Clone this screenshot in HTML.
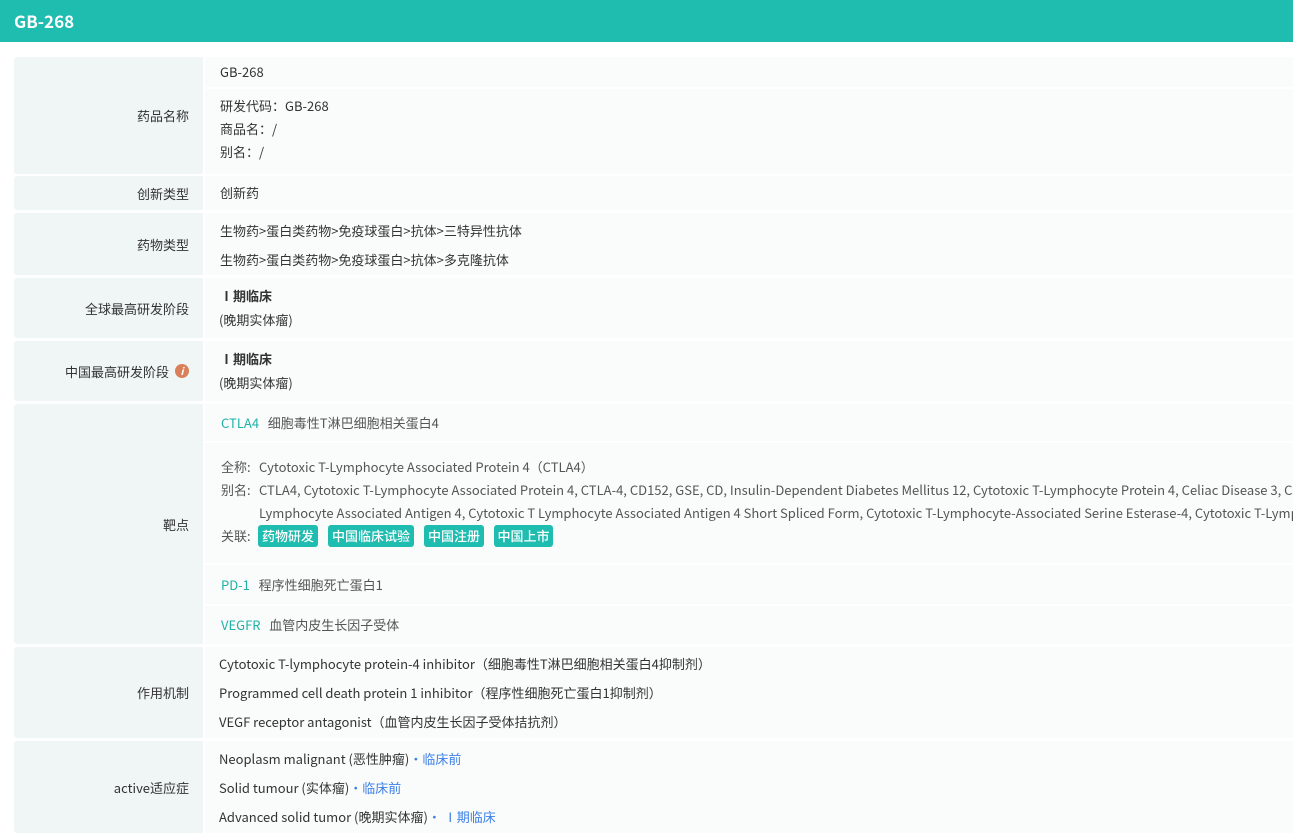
<!DOCTYPE html>
<html><head><meta charset="utf-8"><style>
*{margin:0;padding:0;box-sizing:border-box}
html,body{width:1293px;height:836px;overflow:hidden}
body{background:#fff;font-family:"Noto Sans CJK SC","Liberation Sans",sans-serif;font-size:13px;color:#333;position:relative}
.wrap{position:absolute;left:0;top:0;width:1293px;height:836px;overflow:hidden}
.hd{position:absolute;left:0;top:0;width:1293px;height:42px;background:#1fbcb0;color:#fff;font-weight:bold;font-size:17px;line-height:42px;padding-left:14px}
.l{position:absolute;left:14px;width:189px;background:#eff6f5;padding-right:14px;display:flex;align-items:center;justify-content:flex-end;border-radius:3px 0 0 3px}
.v{position:absolute;left:205px;right:0;background:#fafcfc}
.t{position:absolute;left:220px;white-space:nowrap;line-height:18px}
.teal{color:#1fb1a6}
.blue{color:#3c7fe6}
.tag{position:absolute;top:0;background:#1fbcb0;color:#fff;border-radius:3px;line-height:22px;font-size:13px;text-align:center;font-weight:500}
.g{color:#555}
b{font-weight:bold}
.s{position:absolute;left:38px;top:0}
</style></head><body><div class="wrap">
<div class="hd">GB-268</div>

<div class="l" style="top:57px;height:117px">药品名称</div>
<div class="v" style="top:57px;height:30px"></div>
<div class="v" style="top:89px;height:85px"></div>
<div class="t" style="top:63px">GB-268</div>
<div class="t" style="top:97px">研发代码：GB-268</div>
<div class="t" style="top:120px">商品名：/</div>
<div class="t" style="top:143px">别名：/</div>

<div class="l" style="top:176px;height:34px">创新类型</div>
<div class="v" style="top:176px;height:34px"></div>
<div class="t" style="top:184px">创新药</div>

<div class="l" style="top:213px;height:62px">药物类型</div>
<div class="v" style="top:213px;height:62px"></div>
<div class="t" style="top:222px">生物药&gt;蛋白类药物&gt;免疫球蛋白&gt;抗体&gt;三特异性抗体</div>
<div class="t" style="top:251px">生物药&gt;蛋白类药物&gt;免疫球蛋白&gt;抗体&gt;多克隆抗体</div>

<div class="l" style="top:278px;height:60px">全球最高研发阶段</div>
<div class="v" style="top:278px;height:60px"></div>
<div class="t" style="top:287px"><b>Ⅰ期临床</b></div>
<div class="t" style="top:311px;left:219px">(晚期实体瘤)</div>

<div class="l" style="top:341px;height:60px">中国最高研发阶段 <span style="display:inline-block;width:14px;height:14px;border-radius:50%;background:#d9805a;color:#fff;font-size:10px;line-height:14px;text-align:center;font-style:italic;font-weight:bold;margin-left:6px">i</span></div>
<div class="v" style="top:341px;height:60px"></div>
<div class="t" style="top:350px"><b>Ⅰ期临床</b></div>
<div class="t" style="top:374px;left:219px">(晚期实体瘤)</div>

<div class="l" style="top:404px;height:240px">靶点</div>
<div class="v" style="top:404px;height:37px"></div>
<div class="v" style="top:443px;height:120px"></div>
<div class="v" style="top:565px;height:39px"></div>
<div class="v" style="top:606px;height:38px"></div>
<div class="t g" style="top:414px;left:221px"><span class="teal">CTLA4</span>&nbsp;&nbsp; 细胞毒性T淋巴细胞相关蛋白4</div>
<div class="t g" style="top:458px;left:221px">全称:<span class="s">Cytotoxic T-Lymphocyte Associated Protein 4（CTLA4）</span></div>
<div class="t g" style="top:481px;left:221px">别名:<span class="s">CTLA4, Cytotoxic T-Lymphocyte Associated Protein 4, CTLA-4, CD152, GSE, CD, Insulin-Dependent Diabetes Mellitus 12, Cytotoxic T-Lymphocyte Protein 4, Celiac Disease 3, CELIAC3, Cytotoxic T-</span></div>
<div class="t g" style="top:504px;left:259px">Lymphocyte Associated Antigen 4, Cytotoxic T Lymphocyte Associated Antigen 4 Short Spliced Form, Cytotoxic T-Lymphocyte-Associated Serine Esterase-4, Cytotoxic T-Lymphocyte-</div>
<div class="t g" style="top:527px;left:221px">关联:</div>
<div style="position:absolute;left:0;top:525px">
<span class="tag" style="left:258px;width:60px">药物研发</span>
<span class="tag" style="left:328px;width:86px">中国临床试验</span>
<span class="tag" style="left:424px;width:60px">中国注册</span>
<span class="tag" style="left:494px;width:59px">中国上市</span>
</div>
<div class="t g" style="top:576px;left:221px"><span class="teal">PD-1</span>&nbsp;&nbsp; 程序性细胞死亡蛋白1</div>
<div class="t g" style="top:616px;left:221px"><span class="teal">VEGFR</span>&nbsp;&nbsp; 血管内皮生长因子受体</div>

<div class="l" style="top:647px;height:91px">作用机制</div>
<div class="v" style="top:647px;height:91px"></div>
<div class="t" style="top:655px;left:219px">Cytotoxic T-lymphocyte protein-4 inhibitor（细胞毒性T淋巴细胞相关蛋白4抑制剂）</div>
<div class="t" style="top:684px;left:219px">Programmed cell death protein 1 inhibitor（程序性细胞死亡蛋白1抑制剂）</div>
<div class="t" style="top:713px;left:219px">VEGF receptor antagonist（血管内皮生长因子受体拮抗剂）</div>

<div class="l" style="top:741px;height:92px">active适应症</div>
<div class="v" style="top:741px;height:92px"></div>
<div class="t" style="top:750px;left:219px">Neoplasm malignant (恶性肿瘤)<span class="blue">•临床前</span></div>
<div class="t" style="top:779px;left:219px">Solid tumour (实体瘤)<span class="blue">•临床前</span></div>
<div class="t" style="top:808px;left:219px">Advanced solid tumor (晚期实体瘤)<span class="blue">• Ⅰ期临床</span></div>
</div></body></html>
